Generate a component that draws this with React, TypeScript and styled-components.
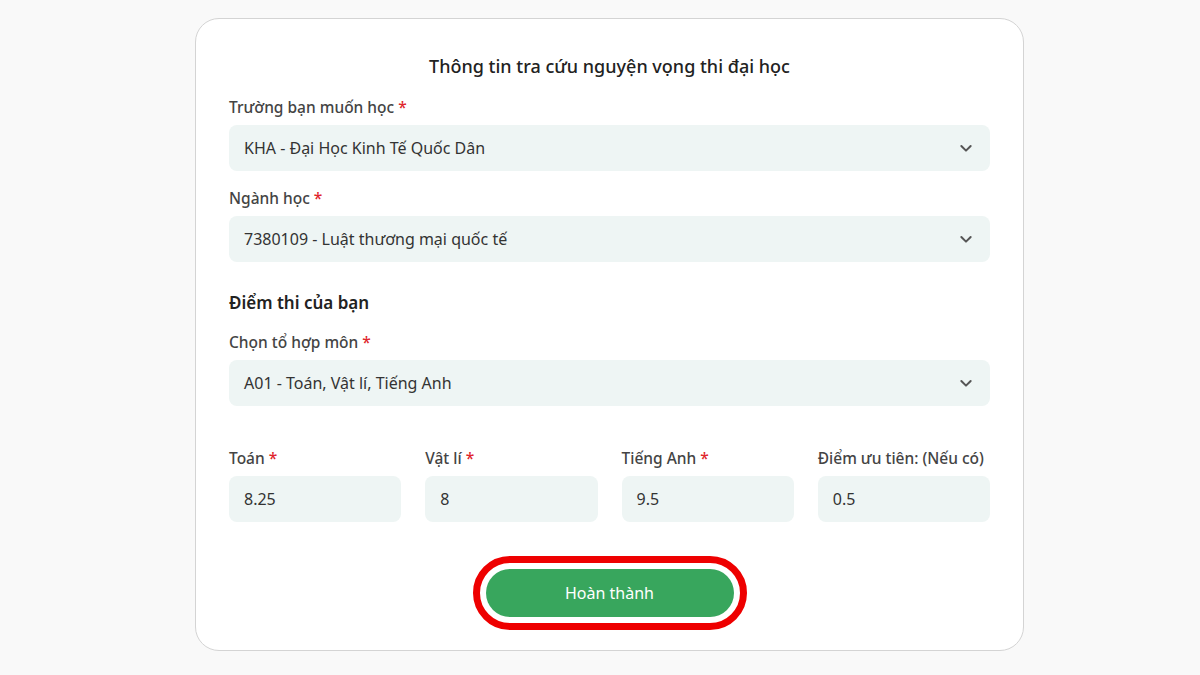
import React from "react";
import styled, { createGlobalStyle } from "styled-components";

const Global = createGlobalStyle`
  html, body { margin: 0; padding: 0; }
  body {
    background: #f9f9f9;
    font-family: "Noto Sans", "Open Sans", sans-serif;
    color: #333;
  }
`;

const Page = styled.div`
  width: 1200px;
  height: 675px;
  display: flex;
  justify-content: center;
  padding: 18px 0 0 19px;
  box-sizing: border-box;
  background: #f9f9f9;
`;

const Card = styled.div`
  width: 829px;
  height: 633px;
  box-sizing: border-box;
  background: #fff;
  border: 1px solid #d4d4d4;
  border-radius: 24px;
  padding: 34px 33px 0 33px;
  display: flex;
  flex-direction: column;
`;

const Title = styled.h1`
  margin: 0 0 17px 0;
  text-align: center;
  font-size: 18px;
  font-weight: 500;
  line-height: 26px;
  color: #222;
`;

const Field = styled.div<{ $mb?: number }>`
  display: flex;
  flex-direction: column;
  margin-bottom: ${(p) => p.$mb ?? 0}px;
`;

const Label = styled.label`
  font-size: 15.5px;
  line-height: 22px;
  font-weight: 500;
  color: #444;
  margin-bottom: 7px;
  white-space: nowrap;
`;

const Req = styled.span`
  color: #e0262d;
  margin-left: 4px;
`;

const SelectBox = styled.div`
  height: 46px;
  border-radius: 8px;
  background: #eef5f4;
  display: flex;
  align-items: center;
  justify-content: space-between;
  padding: 0 16px 0 15px;
  font-size: 16px;
  color: #333;
`;

const Section = styled.h2`
  margin: 0 0 15px 0;
  font-size: 17px;
  line-height: 26px;
  font-weight: 600;
  color: #222;
`;

const Grid = styled.div`
  display: grid;
  grid-template-columns: repeat(4, 1fr);
  column-gap: 24px;
  margin-top: 41px;
`;

const InputBox = styled.div`
  height: 46px;
  border-radius: 8px;
  background: #eef5f4;
  display: flex;
  align-items: center;
  padding: 0 15px;
  font-size: 16px;
  color: #333;
`;

const ButtonRow = styled.div`
  display: flex;
  justify-content: center;
  margin-top: 34px;
`;

const Ring = styled.div`
  border: 7px solid #ee0000;
  border-radius: 999px;
  padding: 6px;
  background: #fff;
`;

const Button = styled.button`
  width: 248px;
  height: 48px;
  border: none;
  border-radius: 999px;
  background: #38a65d;
  color: #fff;
  font-family: inherit;
  font-size: 16px;
  font-weight: 400;
  display: block;
`;

const Chevron = () => (
  <svg width="16" height="16" viewBox="0 0 24 24" fill="none" stroke="#555" strokeWidth="3" strokeLinecap="round" strokeLinejoin="round">
    <polyline points="5 9 12 16 19 9" />
  </svg>
);

const scores = [
  { label: "Toán", req: true, value: "8.25" },
  { label: "Vật lí", req: true, value: "8" },
  { label: "Tiếng Anh", req: true, value: "9.5" },
  { label: "Điểm ưu tiên: (Nếu có)", req: false, value: "0.5" },
];

export default function App() {
  return (
    <>
      <Global />
      <Page>
        <Card>
          <Title>Thông tin tra cứu nguyện vọng thi đại học</Title>
          <Field $mb={16}>
            <Label>
              Trường bạn muốn học<Req>*</Req>
            </Label>
            <SelectBox>
              <span>KHA - Đại Học Kinh Tế Quốc Dân</span>
              <Chevron />
            </SelectBox>
          </Field>
          <Field $mb={28}>
            <Label>
              Ngành học<Req>*</Req>
            </Label>
            <SelectBox>
              <span>7380109 - Luật thương mại quốc tế</span>
              <Chevron />
            </SelectBox>
          </Field>
          <Section>Điểm thi của bạn</Section>
          <Field>
            <Label>
              Chọn tổ hợp môn<Req>*</Req>
            </Label>
            <SelectBox>
              <span>A01 - Toán, Vật lí, Tiếng Anh</span>
              <Chevron />
            </SelectBox>
          </Field>
          <Grid>
            {scores.map((s) => (
              <Field key={s.label}>
                <Label>
                  {s.label}
                  {s.req && <Req>*</Req>}
                </Label>
                <InputBox>{s.value}</InputBox>
              </Field>
            ))}
          </Grid>
          <ButtonRow>
            <Ring>
              <Button>Hoàn thành</Button>
            </Ring>
          </ButtonRow>
        </Card>
      </Page>
    </>
  );
}
